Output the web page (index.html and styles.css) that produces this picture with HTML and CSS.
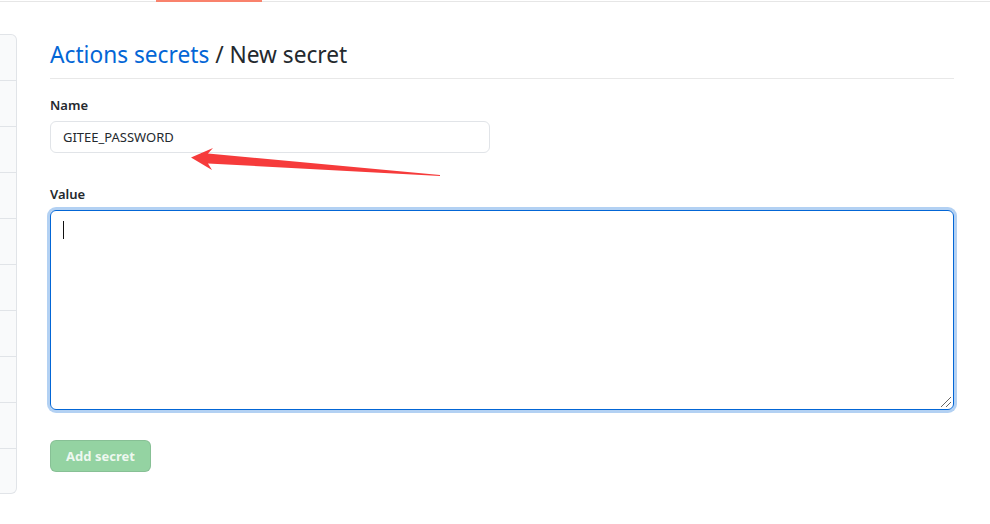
FILE: index.html
```html
<!DOCTYPE html>
<html>
<head>
<meta charset="utf-8">
<link rel="stylesheet" href="styles.css">
</head>
<body>
<div class="topbar"><div class="tab"></div></div>
<div class="layout">
  <nav class="sidebar">
    <div class="row"></div><div class="row"></div><div class="row"></div><div class="row"></div><div class="row"></div>
    <div class="row"></div><div class="row"></div><div class="row"></div><div class="row"></div><div class="row"></div>
  </nav>
  <main class="content">
    <h2 class="subhead"><a class="crumb" href="#">Actions secrets</a> / New secret</h2>
    <form class="form">
      <label class="label">Name</label>
      <div class="input">GITEE_PASSWORD</div>
      <label class="label label-value">Value</label>
      <div class="textarea"><span class="caret"></span><span class="grip"></span></div>
      <button type="button" class="btn">Add secret</button>
    </form>
  </main>
</div>
<svg class="arrow" width="990" height="524" viewBox="0 0 990 524">
  <polygon points="191,157.5 213,148 208,153.5 440,175 440,176 208,163.5 212,170" fill="#f63b3b"/>
</svg>
</body>
</html>
```
FILE: styles.css
```css
html, body { margin: 0; padding: 0; background: #fff; }
body {
  font-family: "Noto Sans", "Open Sans", sans-serif;
  color: #24292e;
  width: 990px;
  height: 524px;
  overflow: hidden;
  position: relative;
}
.topbar {
  height: 1px;
  margin-top: 1px;
  background: #e6e6e6;
  display: flex;
}
.tab {
  margin-left: 156px;
  margin-top: -1px;
  width: 106px;
  height: 2px;
  background: #f9826c;
}
.layout {
  display: flex;
  align-items: flex-start;
}
.sidebar {
  width: 17px;
  margin-top: 32px;
  border: 1px solid #e1e4e8;
  border-left: none;
  border-radius: 0 6px 6px 0;
  background: #f9fafb;
  box-sizing: border-box;
}
.row {
  height: 45px;
  border-bottom: 1px solid #e1e4e8;
}
.row:last-child { border-bottom: none; height: 44px; }
.content {
  margin-left: 33px;
  width: 904px;
  padding-top: 36px;
}
.subhead {
  margin: 0;
  font-size: 22.7px;
  font-weight: 400;
  line-height: 34px;
  padding-bottom: 6px;
  border-bottom: 1px solid #e8e8e8;
  color: #24292e;
}
.crumb { color: #0366d6; text-decoration: none; }
.form { display: flex; flex-direction: column; align-items: flex-start; }
.label {
  font-size: 13px;
  font-weight: 600;
  line-height: 20px;
  margin-top: 16px;
  margin-bottom: 6px;
}
.label-value { margin-top: 31px; }
.input {
  width: 440px;
  height: 32px;
  box-sizing: border-box;
  border: 1px solid #e1e4e8;
  border-radius: 6px;
  padding: 0 12px;
  font-size: 13px;
  line-height: 30px;
  color: #24292e;
}
.textarea {
  width: 904px;
  height: 200px;
  box-sizing: border-box;
  border: 1px solid #0366d6;
  border-radius: 6px;
  box-shadow: 0 0 0 3px rgba(3, 102, 214, 0.3);
  position: relative;
  margin-top: 0;
}
.caret {
  position: absolute;
  left: 12px;
  top: 10px;
  width: 1px;
  height: 18px;
  background: #111;
}
.grip {
  position: absolute;
  right: 2px;
  bottom: 2px;
  width: 10px;
  height: 10px;
  background: linear-gradient(135deg, transparent 45%, #666 45%, #666 52%, transparent 52%, transparent 70%, #666 70%, #666 77%, transparent 77%);
}
.btn {
  margin-top: 30px;
  width: 101px;
  height: 32px;
  border: 1px solid rgba(27, 31, 35, 0.1);
  border-radius: 6px;
  background: #94d3a2;
  color: rgba(255, 255, 255, 0.85);
  font-family: "Noto Sans", "Open Sans", sans-serif;
  font-size: 13px;
  font-weight: 700;
  padding: 0;
}
.arrow {
  position: absolute;
  left: 0;
  top: 0;
  pointer-events: none;
}
```
